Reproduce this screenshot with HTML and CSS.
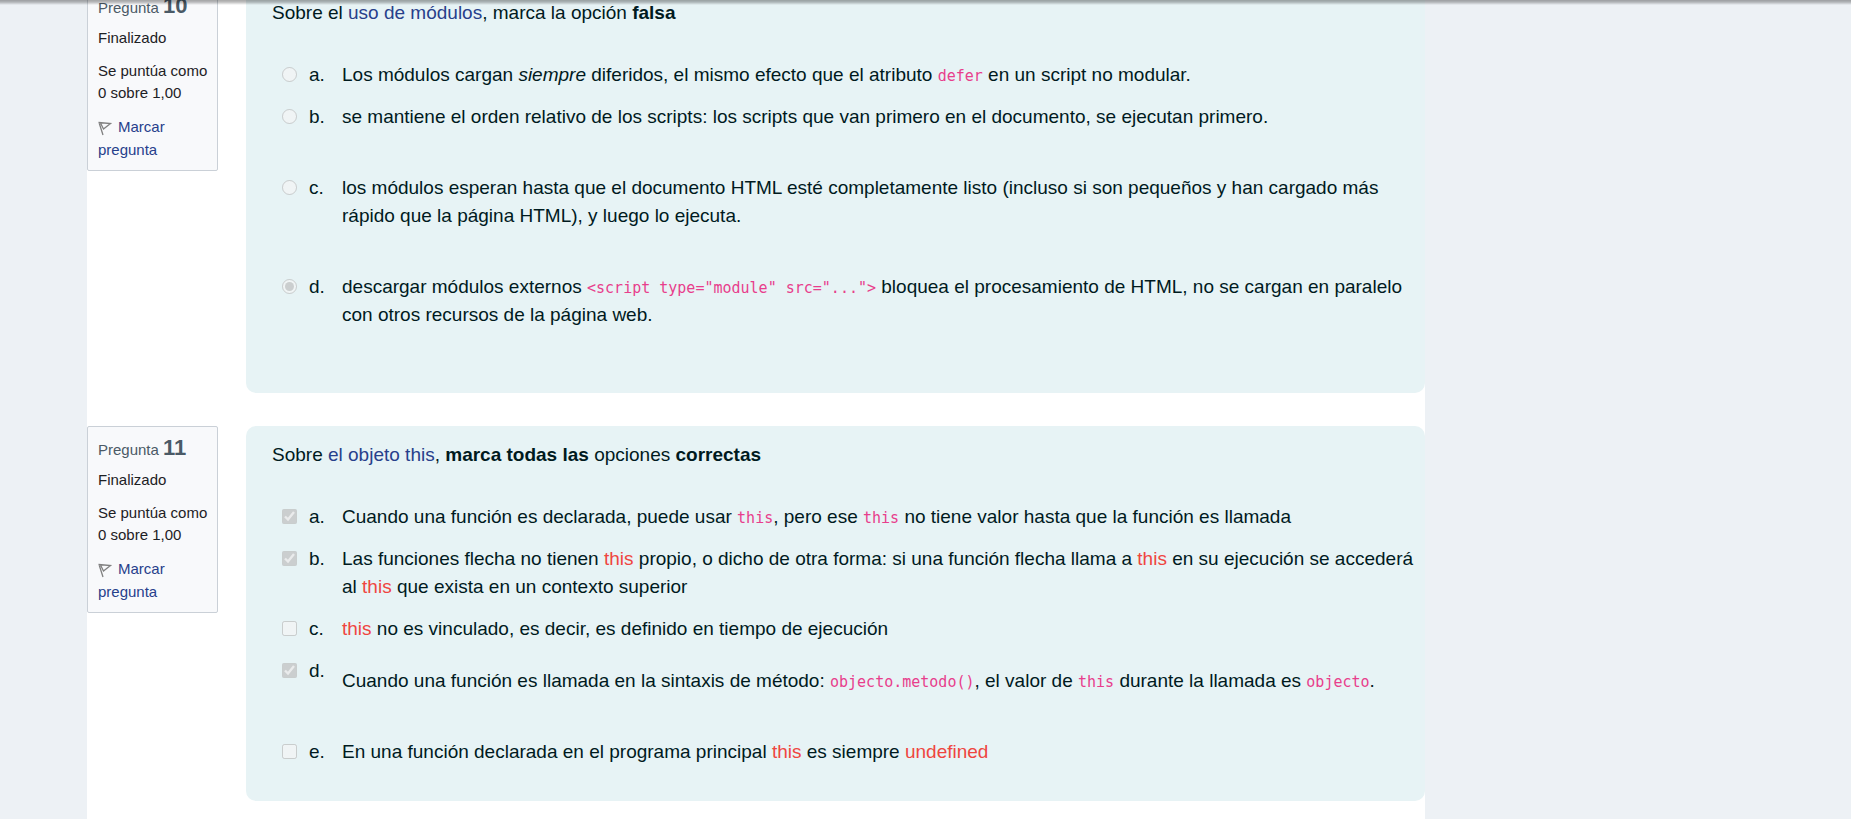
FILE: index.html
```
<!DOCTYPE html>
<html lang="es">
<head>
<meta charset="utf-8">
<title>Cuestionario</title>
<link rel="stylesheet" href="styles.css">
</head>
<body>
<header class="topbar-shadow"></header>
<main class="page">
  <section class="question">
    <aside class="info">
      <h3 class="info-title">Pregunta <span class="info-number">10</span></h3>
      <p class="info-state">Finalizado</p>
      <p class="info-grade">Se puntúa como 0 sobre 1,00</p>
      <a class="flag" href="#"><svg class="flag-icon" viewBox="0 0 15 15" aria-hidden="true"><path d="M0.500 1.500 L12.500 2.500 L5.500 8 L2.500 2 M1 1.500 L5 14"/></svg>Marcar pregunta</a>
    </aside>
    <div class="formulation">
      <p class="statement">Sobre el <a href="#">uso de módulos</a>, marca la opción <b>falsa</b></p>
      <div class="answers">
        <div class="answer"><input type="radio" name="q10" id="q10a" disabled><label for="q10a"><span class="letter">a.</span><span class="text">Los módulos cargan <em>siempre</em> diferidos, el mismo efecto que el atributo <code>defer</code> en un script no modular.</span></label></div>
        <div class="answer spaced"><input type="radio" name="q10" id="q10b" disabled><label for="q10b"><span class="letter">b.</span><span class="text">se mantiene el orden relativo de los scripts: los scripts que van primero en el documento, se ejecutan primero.</span></label></div>
        <div class="answer spaced"><input type="radio" name="q10" id="q10c" disabled><label for="q10c"><span class="letter">c.</span><span class="text">los módulos esperan hasta que el documento HTML esté completamente listo (incluso si son pequeños y han cargado más rápido que la página HTML), y luego lo ejecuta.</span></label></div>
        <div class="answer spaced"><input type="radio" name="q10" id="q10d" checked disabled><label for="q10d"><span class="letter">d.</span><span class="text">descargar módulos externos <code>&lt;script type="module" src="..."&gt;</code> bloquea el procesamiento de HTML, no se cargan en paralelo con otros recursos de la página web.</span></label></div>
      </div>
    </div>
  </section>
  <section class="question">
    <aside class="info">
      <h3 class="info-title">Pregunta <span class="info-number">11</span></h3>
      <p class="info-state">Finalizado</p>
      <p class="info-grade">Se puntúa como 0 sobre 1,00</p>
      <a class="flag" href="#"><svg class="flag-icon" viewBox="0 0 15 15" aria-hidden="true"><path d="M0.500 1.500 L12.500 2.500 L5.500 8 L2.500 2 M1 1.500 L5 14"/></svg>Marcar pregunta</a>
    </aside>
    <div class="formulation">
      <p class="statement">Sobre <a href="#">el objeto this</a>, <b>marca todas las</b> opciones <b>correctas</b></p>
      <div class="answers">
        <div class="answer"><input type="checkbox" id="q11a" checked disabled><label for="q11a"><span class="letter">a.</span><span class="text">Cuando una función es declarada, puede usar <code>this</code>, pero ese <code>this</code> no tiene valor hasta que la función es llamada</span></label></div>
        <div class="answer"><input type="checkbox" id="q11b" checked disabled><label for="q11b"><span class="letter">b.</span><span class="text">Las funciones flecha no tienen <span class="red">this</span> propio, o dicho de otra forma: si una función flecha llama a <span class="red">this</span> en su ejecución se accederá al <span class="red">this</span> que exista en un contexto superior</span></label></div>
        <div class="answer"><input type="checkbox" id="q11c" disabled><label for="q11c"><span class="letter">c.</span><span class="text"><span class="red">this</span> no es vinculado, es decir, es definido en tiempo de ejecución</span></label></div>
        <div class="answer spaced lowered"><input type="checkbox" id="q11d" checked disabled><label for="q11d"><span class="letter">d.</span><span class="text">Cuando una función es llamada en la sintaxis de método: <code>objecto.metodo()</code>, el valor de <code>this</code> durante la llamada es <code>objecto</code>.</span></label></div>
        <div class="answer"><input type="checkbox" id="q11e" disabled><label for="q11e"><span class="letter">e.</span><span class="text">En una función declarada en el programa principal <span class="red">this</span> es siempre <span class="red">undefined</span></span></label></div>
      </div>
    </div>
  </section>
</main>
</body>
</html>
```
FILE: styles.css
```
* { box-sizing: border-box; }
body {
  margin: 0;
  height: 100vh;
  overflow: hidden;
  background: #edf1f5;
  color: #1d2125;
  font-family: "Liberation Sans", Arial, sans-serif;
  font-size: 15px;
  line-height: 22px;
}
h3, p { margin: 0; }
a { color: #27408b; text-decoration: none; }
.topbar-shadow {
  position: fixed;
  top: 0;
  left: 0;
  right: 0;
  height: 5px;
  background: linear-gradient(rgba(0, 0, 0, .34), rgba(0, 0, 0, .26) 40%, rgba(0, 0, 0, 0));
}
.page {
  margin: -16px 426px 0 87px;
  min-height: 100vh;
  background: #fff;
}
.question {
  display: flex;
  align-items: flex-start;
  gap: 28px;
  padding-bottom: 33px;
}
.info {
  flex: 0 0 131px;
  padding: 9px 6px 9px 10px;
  border: 1px solid #cad0d7;
  border-radius: 2px;
  background: #f8f9fb;
}
.info-title {
  color: #4b5a66;
  font-size: 15px;
  font-weight: 400;
  line-height: 24px;
}
.info-number { font-size: 22px; font-weight: 700; }
.info-state { margin-top: 7px; }
.info-grade { margin-top: 11px; }
.flag { display: block; margin-top: 11px; line-height: 23px; }
.flag-icon {
  width: 15px;
  height: 15px;
  margin-right: 5px;
  vertical-align: -4px;
  fill: none;
  stroke: #808080;
  stroke-width: 1.3;
}
.formulation {
  flex: 1;
  min-width: 0;
  padding: 15px 10px 35px 26px;
  border-radius: 10px;
  background: #e7f3f5;
  color: #001a1e;
  font-size: 19px;
  line-height: 28px;
}
.answers {
  display: flex;
  flex-direction: column;
  gap: 14px;
  margin-top: 34px;
  padding-left: 10px;
}
.answer { display: flex; align-items: flex-start; }
.answer input { flex: none; width: 15px; height: 15px; margin: 6px 12px 0 0; }
.answer label { display: flex; flex: 1; min-width: 0; }
.letter { flex: 0 0 33px; }
.text { flex: 1; min-width: 0; }
.spaced { margin-bottom: 29px; }
.lowered .text { padding-top: 10px; }
code {
  color: #e83e8c;
  font-family: "DejaVu Sans Mono", monospace;
  font-size: 15px;
  line-height: 20px;
}
.red { color: #ef4540; }
```
